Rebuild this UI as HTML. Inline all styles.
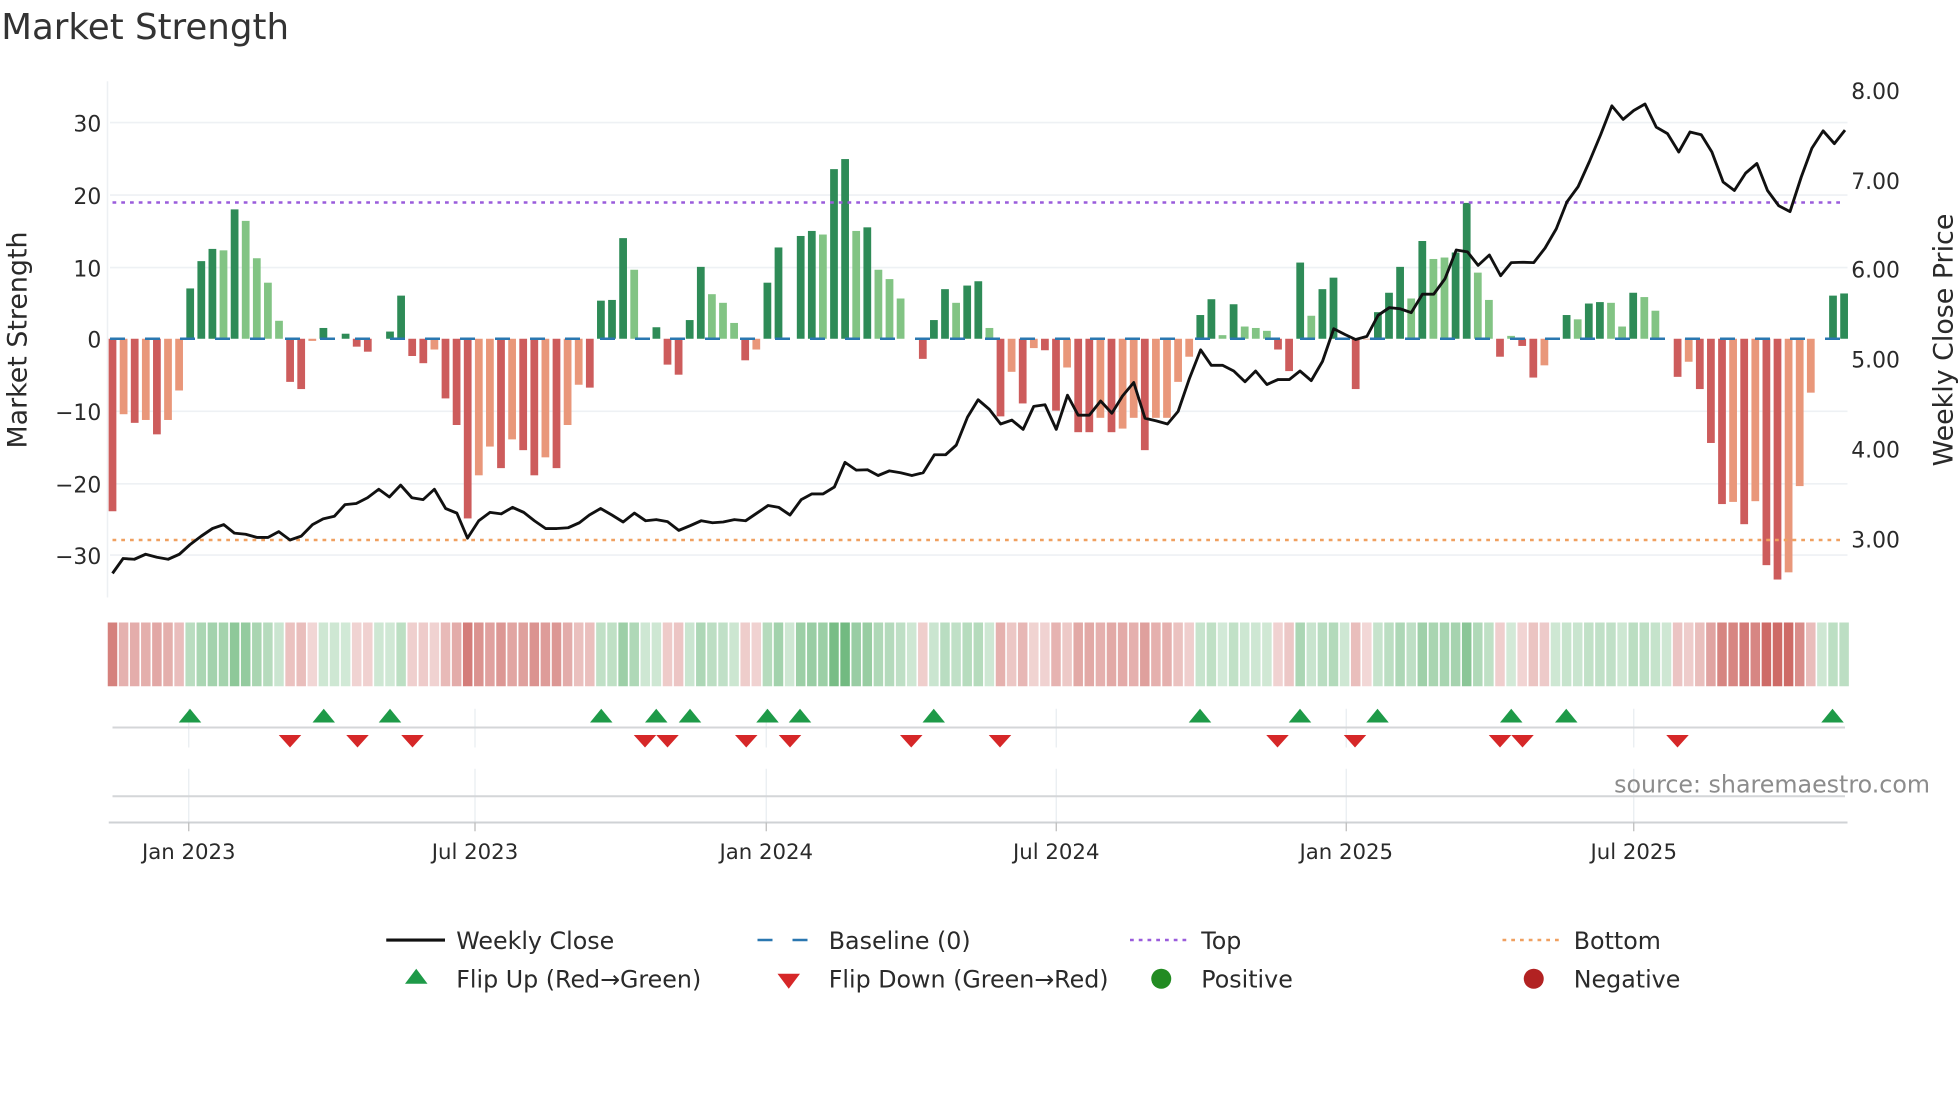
<!DOCTYPE html>
<html><head><meta charset="utf-8">
<style>
html,body{margin:0;padding:0;background:#fff;}
svg{display:block;}
text{font-family:"DejaVu Sans","Liberation Sans",sans-serif;fill:#2a2a2a;}
</style></head>
<body>
<svg id="s" width="1960" height="1102" viewBox="0 0 1568 881.6" xmlns="http://www.w3.org/2000/svg">
<rect width="1568" height="882" fill="#fff"/>
<text x="1" y="31" font-size="28.5" style="fill:#333">Market Strength</text>
<line x1="86" y1="65" x2="86" y2="478" stroke="#edf0f3" stroke-width="1.2"/>
<g stroke="#eef1f4" stroke-width="1.3">
<line x1="88" y1="98" x2="1478" y2="98"/><line x1="88" y1="156" x2="1478" y2="156"/>
<line x1="88" y1="214" x2="1478" y2="214"/><line x1="88" y1="329" x2="1478" y2="329"/>
<line x1="88" y1="387" x2="1478" y2="387"/><line x1="88" y1="444" x2="1478" y2="444"/>
</g>
<g font-size="17.5" text-anchor="end">
<text x="81" y="105">30</text><text x="81" y="163">20</text><text x="81" y="221">10</text>
<text x="81" y="278">0</text><text x="81" y="336">−10</text><text x="81" y="394">−20</text><text x="81" y="451">−30</text>
</g>
<g font-size="17.5">
<text x="1481" y="79">8.00</text><text x="1481" y="151">7.00</text><text x="1481" y="222">6.00</text>
<text x="1481" y="294">5.00</text><text x="1481" y="366">4.00</text><text x="1481" y="438">3.00</text>
</g>
<text transform="translate(21,272) rotate(-90)" font-size="21.5" text-anchor="middle">Market Strength</text>
<text transform="translate(1562,272) rotate(-90)" font-size="21.5" text-anchor="middle">Weekly Close Price</text>
<g id="bars"></g>
<line x1="88" y1="271" x2="1478" y2="271" stroke="#2a77b0" stroke-width="2" stroke-dasharray="12,16"/>
<line x1="90" y1="162" x2="1476" y2="162" stroke="#9a5cdc" stroke-width="2" stroke-dasharray="3,4"/>
<line x1="90" y1="432" x2="1476" y2="432" stroke="#f0a060" stroke-width="2" stroke-dasharray="3,4"/>
<polyline id="price" fill="none" stroke="#111" stroke-width="2.3" stroke-linejoin="round"/>
<g id="strip"></g>
<g stroke="#e8edf1" stroke-width="1">
<line x1="151" y1="567" x2="151" y2="598"/><line x1="380" y1="567" x2="380" y2="598"/><line x1="613" y1="567" x2="613" y2="598"/><line x1="845" y1="567" x2="845" y2="598"/><line x1="1077" y1="567" x2="1077" y2="598"/><line x1="1307" y1="567" x2="1307" y2="598"/>
<line x1="151" y1="615" x2="151" y2="658"/><line x1="380" y1="615" x2="380" y2="658"/><line x1="613" y1="615" x2="613" y2="658"/><line x1="845" y1="615" x2="845" y2="658"/><line x1="1077" y1="615" x2="1077" y2="658"/><line x1="1307" y1="615" x2="1307" y2="658"/>
</g>
<line x1="90" y1="582" x2="1476" y2="582" stroke="#d4d6d8" stroke-width="1.6"/>
<line x1="90" y1="637" x2="1476" y2="637" stroke="#d4d6d8" stroke-width="1.6"/>
<line x1="87" y1="658" x2="1478" y2="658" stroke="#cfd2d5" stroke-width="1.6"/>
<g stroke="#bbb" stroke-width="1">
<line x1="151" y1="658" x2="151" y2="665"/><line x1="380" y1="658" x2="380" y2="665"/><line x1="613" y1="658" x2="613" y2="665"/><line x1="845" y1="658" x2="845" y2="665"/><line x1="1077" y1="658" x2="1077" y2="665"/><line x1="1307" y1="658" x2="1307" y2="665"/>
</g>
<g id="marks"></g>
<text x="1544" y="634" font-size="19" style="fill:#8c8c8c" text-anchor="end">source: sharemaestro.com</text>
<g font-size="17" text-anchor="middle">
<text x="151" y="687">Jan 2023</text><text x="380" y="687">Jul 2023</text><text x="613" y="687">Jan 2024</text>
<text x="845" y="687">Jul 2024</text><text x="1077" y="687">Jan 2025</text><text x="1307" y="687">Jul 2025</text>
</g>
<g font-size="19">
<line x1="309" y1="752" x2="356" y2="752" stroke="#111" stroke-width="2.5"/>
<text x="365" y="759">Weekly Close</text>
<line x1="606" y1="752" x2="654" y2="752" stroke="#2a77b0" stroke-width="2" stroke-dasharray="12,16"/>
<text x="663" y="759">Baseline (0)</text>
<line x1="904" y1="752" x2="950" y2="752" stroke="#9a5cdc" stroke-width="2" stroke-dasharray="3,4"/>
<text x="961" y="759">Top</text>
<line x1="1202" y1="752" x2="1248" y2="752" stroke="#f0a060" stroke-width="2" stroke-dasharray="3,4"/>
<text x="1259" y="759">Bottom</text>
<polygon points="324,787 333,775 342,787" fill="#1e9a48"/>
<text x="365" y="790">Flip Up (Red→Green)</text>
<polygon points="622,779 640,779 631,791" fill="#d62728"/>
<text x="663" y="790">Flip Down (Green→Red)</text>
<circle cx="929" cy="783" r="8" fill="#228b22"/>
<text x="961" y="790">Positive</text>
<circle cx="1227" cy="783" r="8" fill="#b22222"/>
<text x="1259" y="790">Negative</text>
</g>
</svg>
<script>
var NS="http://www.w3.org/2000/svg";
function el(t,a,p){var e=document.createElementNS(NS,t);for(var k in a)e.setAttribute(k,a[k]);p.appendChild(e);return e;}
var raw="-24,-10.5L,-11.7,-11.3L,-13.3,-11.3L,-7.2L,7,10.8,12.5,12.3L,18,16.4L,11.2L,7.8L,2.5L,-6,-7,-0.3L,1.5,0,0.7,-1.1,-1.8,0,1,6,-2.4,-3.4,-1.5L,-8.3,-12,-25,-19L,-15L,-18,-14L,-15.5,-19,-16.5L,-18,-12L,-6.4L,-6.8,5.3,5.4,14,9.6L,0,1.6,-3.6,-5,2.6,10,6.2L,5L,2.2L,-3,-1.5L,7.8,12.7,0,14.3,15,14.5L,23.6,25,15L,15.5,9.6L,8.3L,5.6L,0,-2.8,2.6,6.9,5L,7.4,8,"+
"1.5L,-10.8,-4.6L,-9,-1.3L,-1.6,-10,-4L,-13,-13,-11L,-13,-12.5L,-11L,-15.5,-11L,-11L,-6L,-2.5L,3.3,5.5,0.5L,4.8,1.7L,1.5L,1.1L,-1.5,-4.5,10.6,3.2L,6.9,8.5,0,-7,-0.1L,3.7,6.4,10,5.6L,13.6,11.1L,11.3L,12,18.9,9.2L,5.4L,-2.5,0.4L,-1,-5.4,-3.7L,0,3.3,2.7L,4.9,5.1,5L,1.7L,6.4,5.8L,3.9L,0,-5.3,-3.2L,-7,-14.5,-23,-22.7L,-25.8,-22.6L,-31.5,-33.5,-32.5L,-20.5L,-7.5L,0,6,6.3";
var arr=raw.split(",");
var bars=document.getElementById("bars"),strip=document.getElementById("strip");
var step=8.88,bw=6.2;
for(var i=0;i<arr.length;i++){
 var s=arr[i],L=s.indexOf("L")>=0,v=parseFloat(s);
 var x=90+i*step;
 var c=v>=0?(L?"#82c484":"#2e8b57"):(L?"#e9977a":"#cd5c5c");
 if(v!==0){var h=Math.abs(v)*5.75;el("rect",{x:x-bw/2,y:v>0?271-h:271,width:bw,height:h,fill:c},bars);}
 var a=Math.min(0.82,0.22+Math.abs(v)/30*0.6);
 var sc=v>=0?"rgba(60,160,80,"+a+")":"rgba(195,75,70,"+a+")";
 if(v===0)sc="rgba(60,160,80,0.25)";
 el("rect",{x:x-3.8,y:498,width:7.6,height:51,fill:sc},strip);
}
var p1=[[180,1497],[197,1458],[215,1460],[233,1447],[251,1455],[269,1460],[287,1447],[304,1422],[322,1400],[340,1380],[358,1370],[375,1392],[393,1395],[411,1403],[429,1403],[446,1388],[464,1410],[482,1400],[500,1370],[517,1355],[535,1348],[552,1318],[570,1315],[588,1300],[606,1278],[623,1298],[641,1267],[659,1300],[677,1305],[695,1278],[713,1328],[731,1340],[748,1405],[766,1360],[784,1338],[802,1342],[820,1325],[838,1338],[855,1360],[873,1380],[891,1380],[909,1378],[927,1365],[943,1345],[961,1328],[979,1345],[997,1363],[1015,1340],[1033,1360],[1050,1357],[1068,1362],[1086,1385],[1104,1373],[1122,1360],[1140,1365],[1157,1363],[1175,1357],[1193,1360],[1211,1340],[1229,1320],[1246,1325],[1264,1345],[1282,1305],[1299,1290],[1317,1290],[1335,1272],[1352,1208],[1370,1228],[1388,1227],[1405,1242],[1423,1230],[1441,1235],[1459,1242],[1477,1235],[1495,1188],[1513,1188],[1530,1163],[1548,1090],[1565,1045]];
var p2=[[15,1070],[33,1108],[51,1098],[69,1122],[86,1062],[104,1058],[122,1122],[140,1033],[157,1085],[175,1085],[193,1048],[211,1080],[228,1035],[246,1000],[264,1093],[282,1100],[300,1108],[317,1075],[335,990],[353,915],[370,955],[388,955],[406,970],[424,998],[441,970],[459,1005],[477,992],[495,992],[512,970],[530,995],[548,945],[566,860],[584,875],[601,888],[619,880],[637,825],[655,805],[672,808],[690,818],[708,770],[726,770],[744,730],[762,655],[780,660],[797,695],[815,668],[833,722],[850,688],[868,687],[886,688],[904,650],[922,600],[939,530],[957,490],[975,425],[993,355],[1011,280],[1029,315],[1046,292],[1064,275],[1082,335],[1100,352],[1118,400],[1136,348],[1154,355],[1171,400],[1189,478],[1207,500],[1225,455],[1243,430],[1260,500],[1278,540],[1296,555],[1314,465],[1331,390],[1349,345],[1367,378],[1384,343]];
var pts=[];
p1.forEach(function(p){pts.push((p[0]/2).toFixed(1)+","+(p[1]/3.254-1.3).toFixed(1));});
p2.forEach(function(p){pts.push((784+p[0]/2).toFixed(1)+","+(p[1]/3.254-1.3).toFixed(1));});
document.getElementById("price").setAttribute("points",pts.join(" "));
var marks=document.getElementById("marks");
[152,259,312,481,525,552,614,640,747,960,1040,1102,1209,1253,1466].forEach(function(x){el("polygon",{points:(x-9)+",578 "+x+",567 "+(x+9)+",578",fill:"#1e9a48"},marks);});
[232,286,330,516,534,597,632,729,800,1022,1084,1200,1218,1342].forEach(function(x){el("polygon",{points:(x-9)+",588 "+(x+9)+",588 "+x+",598",fill:"#d62728"},marks);});
</script>
</body></html>
